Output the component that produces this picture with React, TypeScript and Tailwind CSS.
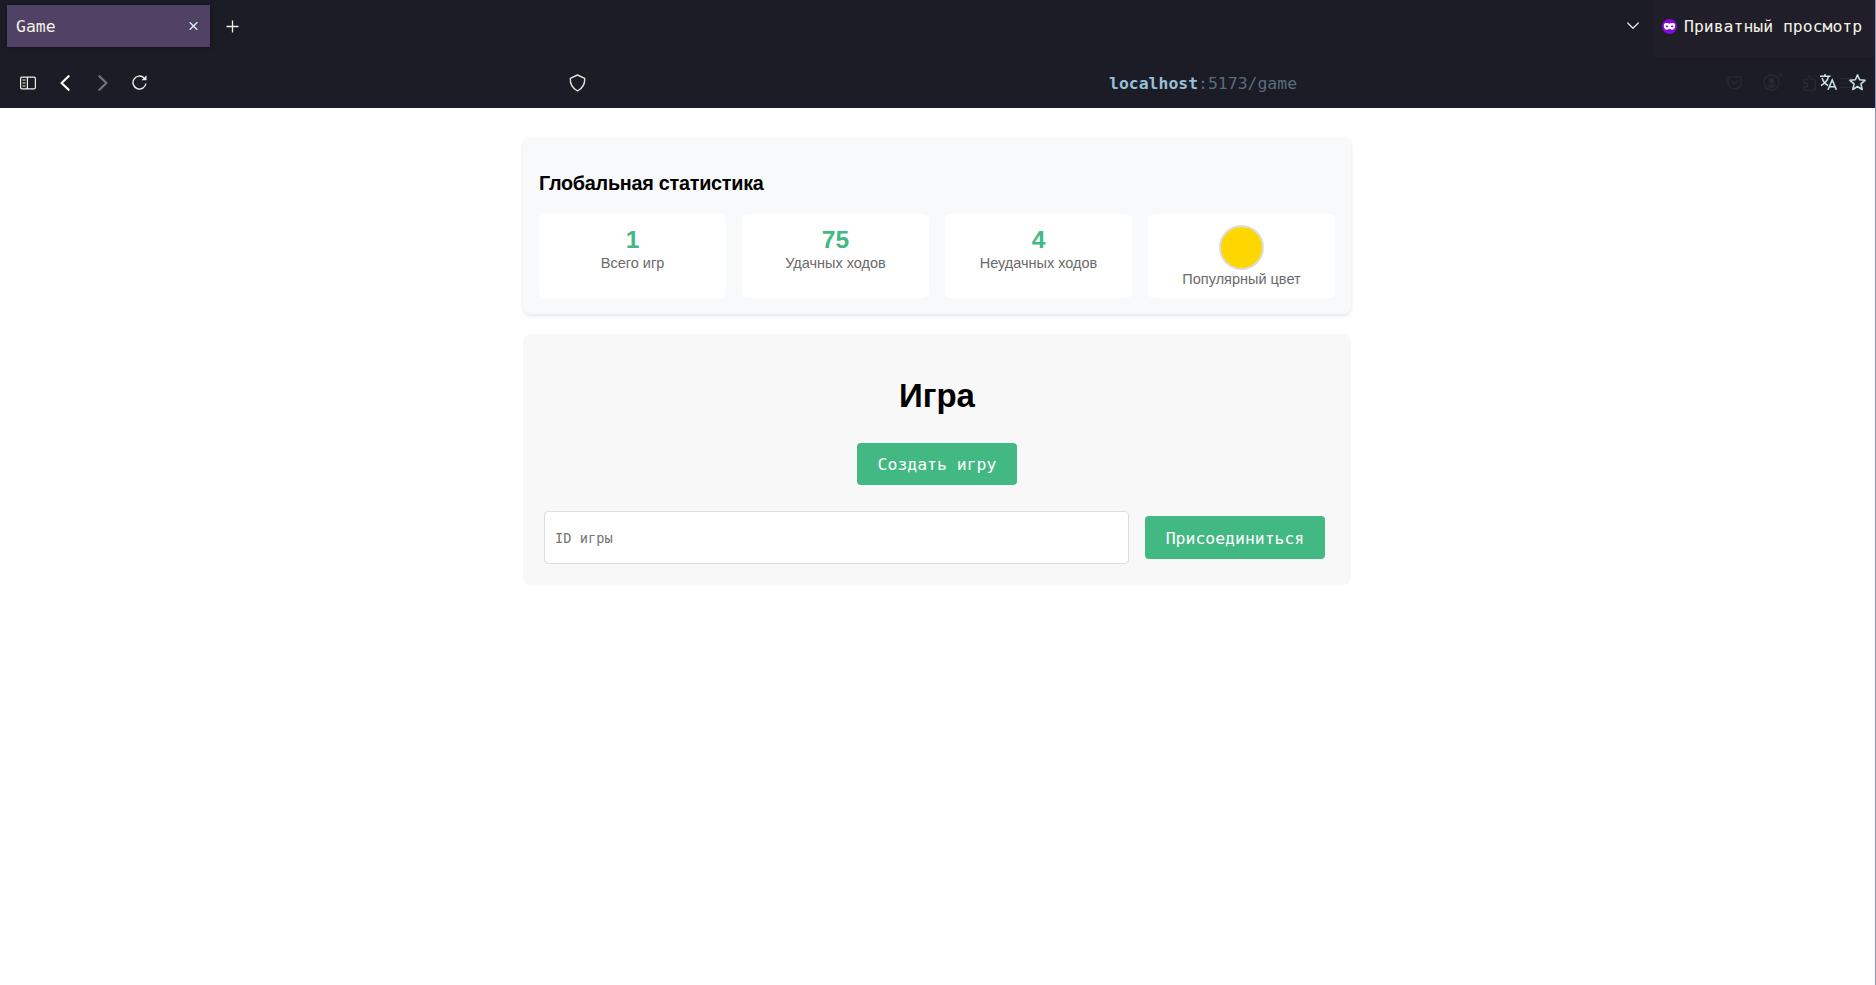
import React from "react";

const MONO = "font-['DejaVu_Sans_Mono',monospace]";

function TabBar() {
  return (
    <div className="flex h-[57px] items-start">
      <div className="ml-[7px] mt-[5px] flex h-[42px] w-[203px] items-center justify-between bg-[#4f4265] pl-[9px] pr-[12px] shadow-[0_0_4px_rgba(0,0,0,0.5)]">
        <span className="pt-[2px] text-[16.45px] leading-none text-[#f3f1e6]">Game</span>
        <svg width="9" height="8" viewBox="0 0 9 8" fill="none" stroke="#dcebf0" strokeWidth="1.5">
          <path d="M.7.3l7.6 7.4M8.3.3L.7 7.7" />
        </svg>
      </div>
      <svg className="ml-[16px] mt-[20px]" width="13" height="13" viewBox="0 0 13 13" fill="none" stroke="#f0f0e6" strokeWidth="1.3">
        <path d="M6.5.5v12M.5 6.5h12" />
      </svg>
      <svg className="ml-auto mr-[15px] mt-[22px]" width="12" height="8" viewBox="0 0 12 8" fill="none" stroke="#e4e4dc" strokeWidth="1.3" strokeLinecap="round" strokeLinejoin="round">
        <path d="M.7 1L6 6.3 11.3 1" />
      </svg>
      <div className="flex h-[57px] w-[221px] items-center bg-[#201f29] pb-[5px] pl-[8px]">
        <svg width="15" height="15" viewBox="0 0 15 15" fill="none">
          <circle cx="7.5" cy="7.5" r="7.5" fill="#8409dc" />
          <path d="M1.8 6.2C1.9 4.5 3.4 3.9 5 4.1c1.2.1 1.8.6 2.5.6s1.300-.5 2.500-.6c1.600-.2 3.100.4 3.200 2.100.1 2.700-1.200 4.600-3.100 4.600-1.200 0-1.800-1-2.600-1s-1.400 1-2.600 1c-1.900 0-3.200-1.900-3.100-4.600z" fill="#fff" />
          <ellipse cx="4.900" cy="7.300" rx="1.300" ry=".9" fill="#8409dc" />
          <ellipse cx="10.100" cy="7.300" rx="1.300" ry=".9" fill="#8409dc" />
        </svg>
        <span className="ml-[7px] whitespace-nowrap pt-[2px] text-[16.45px] leading-none text-[#f3f1e6]">Приватный просмотр</span>
      </div>
    </div>
  );
}

function NavBar() {
  return (
    <div className="flex h-[51px] items-center">
      <svg className="ml-[20px]" width="16" height="14" viewBox="0 0 16 14" fill="none" stroke="#f0f0e6" strokeWidth="1.200">
        <rect x=".6" y="1.100" width="14.800" height="11.800" rx="1.500" />
        <path d="M7.400 1v12M2.500 4h3M2.500 7h3M2.500 10h3" />
      </svg>
      <svg className="ml-[24px]" width="10" height="16" viewBox="0 0 10 16" fill="none" stroke="#fbfbf4" strokeWidth="2.200" strokeLinecap="round" strokeLinejoin="round">
        <path d="M8.600 1.200L1.600 8l7 6.800" />
      </svg>
      <svg className="ml-[28px]" width="10" height="16" viewBox="0 0 10 16" fill="none" stroke="#75747a" strokeWidth="2.200" strokeLinecap="round" strokeLinejoin="round">
        <path d="M1.400 1.200l7 6.800-7 6.800" />
      </svg>
      <svg className="ml-[24px]" width="15" height="15" viewBox="0 0 15 15" fill="none" stroke="#f0f0e6" strokeWidth="1.400">
        <path d="M13.900 8.500A6.500 6.500 0 1 1 12.100 3" />
        <path d="M14.500.3V5.300H9.500z" fill="#f0f0e6" stroke="none" />
      </svg>
      <svg className="ml-[422px]" width="17" height="18" viewBox="0 0 17 18" fill="none" stroke="#e2e2da" strokeWidth="1.400" strokeLinejoin="round">
        <path d="M8.500 1L15.700 4.300c.3 5.700-2 10-7.200 12.700C3.300 14.300 1 10 1.300 4.300z" />
      </svg>
      <div className="ml-[523px] whitespace-nowrap pt-[3px] text-[16.45px] leading-none text-[#586c7c]">
        <span className="font-bold text-[#97bfd8]">localhost</span>:5173/game
      </div>
      <svg className="ml-auto" width="15" height="14" viewBox="0 0 15 14" fill="none" stroke="#292833" strokeWidth="1.400" strokeLinecap="round" strokeLinejoin="round">
        <path d="M2 1h11a1 1 0 0 1 1 1v4.500a6.500 6.500 0 0 1-13 0V2a1 1 0 0 1 1-1zM4.500 5l3 3 3-3" />
      </svg>
      <div className="relative ml-[21px] h-[17px] w-[17px]">
        <svg width="17" height="17" viewBox="0 0 17 17" fill="none" stroke="#292833" strokeWidth="1.500">
          <circle cx="8.500" cy="8.500" r="7.600" />
          <circle cx="8.500" cy="6.700" r="2.700" fill="#292833" stroke="none" />
          <path d="M4 10.500h9c-.8 2.500-2.500 3.300-4.500 3.300S4.800 13 4 10.500z" fill="#292833" stroke="none" />
        </svg>
        <span className="absolute -right-[3px] -top-[2px] h-[5px] w-[5px] rounded-full bg-[#1a2732]" />
      </div>
      <svg className="ml-[23px]" width="13" height="16" viewBox="0 0 13 16" fill="none" stroke="#292833" strokeWidth="1.400" strokeLinejoin="round">
        <path d="M.8 4.500H5V2.500a1.500 1.500 0 0 1 3 0v2h3.500a.8.8 0 0 1 .8.800v9.200a.8.8 0 0 1-.8.800H.8v-3.500H3a1.500 1.500 0 0 0 0-3.500H.8z" />
      </svg>
      <svg className="ml-[4px] mb-[2px]" width="17" height="16" viewBox="0 0 17 16" fill="none" stroke="#cde2e4" strokeWidth="1.500">
        <path d="M0 2.200h10.500M5 0v2.200M8.500 2.500C7.600 6.200 4.600 9.600 1 11.600M2.100 4c.9 3.200 3 5.800 6 7.500" />
        <path d="M8 15.800L12.200 6l4.200 9.800M9.500 12.700h5.500" />
      </svg>
      <div className="relative ml-[3px] mr-[9px] flex h-[18px] w-[26px] justify-end">
        <svg className="absolute left-0 top-[4px]" width="13" height="10" viewBox="0 0 13 10" stroke="#292833" strokeWidth="1.200">
          <path d="M0 .7h13M0 5h13M0 9.300h13" />
        </svg>
        <svg className="relative" width="17" height="17" viewBox="0 0 17 17" fill="#1c1c26" stroke="#cde2e4" strokeWidth="1.500" strokeLinejoin="round">
          <path d="M8.500.9l2.100 4.900 5.500.5-4.200 3.500 1.300 5.700-4.700-3-4.700 3 1.300-5.700L.9 6.300l5.500-.5z" />
        </svg>
      </div>
    </div>
  );
}

function Stat({ label, children }: { label: string; children: React.ReactNode }) {
  return (
    <div className="flex h-[84px] flex-col items-center rounded-[6px] bg-white pt-[11px]">
      {children}
      <div className="pt-px text-[14.5px] leading-[17px] text-[#6a6a6a]">{label}</div>
    </div>
  );
}

function Value({ children }: { children: React.ReactNode }) {
  return <div className="h-[29px] text-[24.6px] font-bold leading-[29px] text-[#42b883]">{children}</div>;
}

export default function App() {
  return (
    <div className="flex h-[985px] w-[1876px] flex-col overflow-hidden border-r border-[#7f8fd0] bg-white font-['Liberation_Sans',Arial,sans-serif] text-black">
      <header className={`h-[108px] shrink-0 bg-[#1c1c26] ${MONO}`}>
        <TabBar />
        <NavBar />
      </header>
      <main className="ml-[523px] w-[828px]">
        <section className="mt-[29px] h-[177px] rounded-[8px] bg-[#f8f9fb] px-4 pt-[34px] shadow-[0_2px_4px_rgba(0,0,0,0.1)]">
          <h3 className="text-[19.8px] font-bold leading-[25px] tracking-[-0.25px]">Глобальная статистика</h3>
          <div className="mt-[18px] grid grid-cols-4 gap-4">
            <Stat label="Всего игр"><Value>1</Value></Stat>
            <Stat label="Удачных ходов"><Value>75</Value></Stat>
            <Stat label="Неудачных ходов"><Value>4</Value></Stat>
            <Stat label="Популярный цвет">
              <div className="h-[45px] w-[45px] shrink-0 rounded-full border-2 border-[#dddddd] bg-[#ffd700]" />
            </Stat>
          </div>
        </section>
        <section className="mt-[20px] flex h-[251px] flex-col items-center rounded-[8px] bg-[#f8f8f8] pt-[43px]">
          <h1 className="text-[33px] font-bold leading-[38px]">Игра</h1>
          <button className={`mt-[28px] h-[42px] w-[160px] rounded-[4px] bg-[#42b883] pt-[2px] text-[16.45px] leading-none text-white ${MONO}`}>
            Создать игру
          </button>
          <div className="mt-[26px] flex w-full items-center gap-4 pl-[21px] pr-[26px]">
            <input
              className={`h-[53px] min-w-0 flex-1 rounded-[4px] border border-[#dddddd] bg-white px-[10px] text-[13.7px] text-black placeholder:text-[#757575] ${MONO}`}
              placeholder="ID игры"
            />
            <button className={`h-[43px] w-[180px] rounded-[4px] bg-[#42b883] pt-[3px] text-[16.45px] leading-none text-white ${MONO}`}>
              Присоединиться
            </button>
          </div>
        </section>
      </main>
    </div>
  );
}
